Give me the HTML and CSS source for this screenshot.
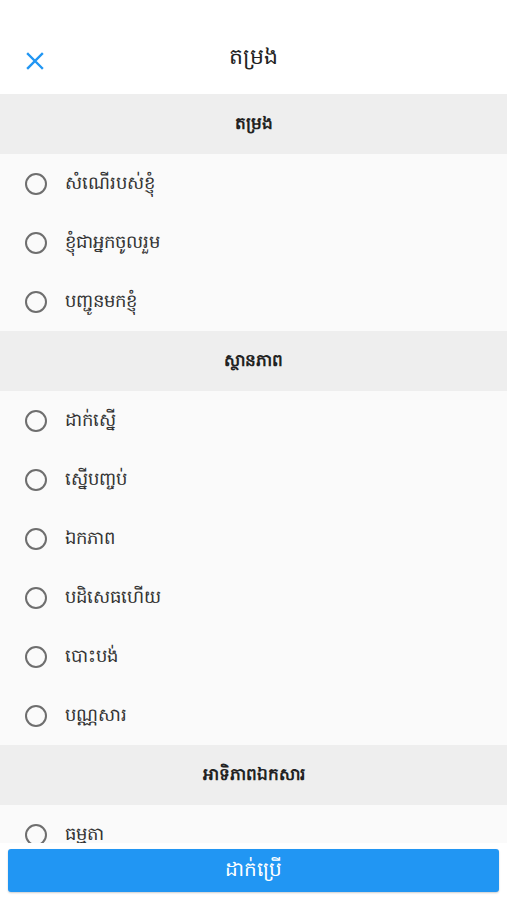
FILE: index.html
```html
<!DOCTYPE html>
<html lang="km">
<head>
    <meta charset="UTF-8">
    <meta name="viewport" content="width=device-width, initial-scale=1.0">
    <title>តម្រង</title>
    <link rel="stylesheet" href="styles.css">
</head>
<body>
    <div class="filter-screen">
        <!-- Header -->
        <header class="filter-header">
            <button class="close-btn" aria-label="close">
                <svg width="20" height="20" viewBox="0 0 20 20">
                    <path d="M3 3 L17 17 M17 3 L3 17" stroke="#2196F3" stroke-width="2.4" stroke-linecap="square" fill="none"/>
                </svg>
            </button>
            <h1 class="filter-title">តម្រង</h1>
        </header>

        <!-- Filter List -->
        <div class="filter-list">
            <div class="section-title">តម្រង</div>
            <label class="option"><span class="radio"></span>សំណើរបស់ខ្ញុំ</label>
            <label class="option"><span class="radio"></span>ខ្ញុំជាអ្នកចូលរួម</label>
            <label class="option"><span class="radio"></span>បញ្ជូនមកខ្ញុំ</label>

            <div class="section-title">ស្ថានភាព</div>
            <label class="option"><span class="radio"></span>ដាក់ស្នើ</label>
            <label class="option"><span class="radio"></span>ស្នើបញ្ចប់</label>
            <label class="option"><span class="radio"></span>ឯកភាព</label>
            <label class="option"><span class="radio"></span>បដិសេធហើយ</label>
            <label class="option"><span class="radio"></span>បោះបង់</label>
            <label class="option"><span class="radio"></span>បណ្ណសារ</label>

            <div class="section-title">អាទិភាពឯកសារ</div>
            <label class="option"><span class="radio"></span>ធម្មតា</label>
        </div>

        <!-- Footer -->
        <footer class="filter-footer">
            <button class="apply-btn">ដាក់ប្រើ</button>
        </footer>
    </div>
</body>
</html>
```

FILE: styles.css
```css
/* ----- Color Variables ----- */
:root {
    --primary-color: #2196F3;
    --header-background: #FFFFFF;
    --section-background: #EEEEEE;
    --list-background: #FAFAFA;
    --text-color: #333333;
    --radio-color: #6E6E6E;
}

/* ----- Global Reset ----- */
* {
    margin: 0;
    padding: 0;
    box-sizing: border-box;
    font-family: "Noto Sans", "DejaVu Sans", sans-serif;
}

body {
    background: #FFFFFF;
    height: 100vh;
    overflow: hidden;
}

.filter-screen {
    height: 100vh;
    display: flex;
    flex-direction: column;
}

/* ----- Header ----- */
.filter-header {
    height: 94px;
    padding-top: 24px;
    background: var(--header-background);
    display: flex;
    align-items: center;
    position: relative;
}

.close-btn {
    width: 70px;
    height: 70px;
    border: none;
    background: none;
    display: flex;
    align-items: center;
    justify-content: center;
    margin-top: 4px;
}

.filter-title {
    position: absolute;
    left: 0;
    right: 0;
    top: 24px;
    height: 62px;
    line-height: 62px;
    text-align: center;
    font-size: 22px;
    font-weight: 400;
    color: #222;
    pointer-events: none;
}

/* ----- List ----- */
.filter-list {
    flex: 1;
    overflow: hidden;
    background: var(--list-background);
}

.section-title {
    height: 60px;
    background: var(--section-background);
    display: flex;
    align-items: center;
    justify-content: center;
    font-size: 17px;
    font-weight: 700;
    color: #222;
}

.option {
    height: 59px;
    display: flex;
    align-items: center;
    gap: 18px;
    padding-left: 25px;
    font-size: 18px;
    color: var(--text-color);
}

.radio {
    width: 22px;
    height: 22px;
    border: 2px solid var(--radio-color);
    border-radius: 50%;
    flex-shrink: 0;
}

/* ----- Footer ----- */
.filter-footer {
    padding: 6px 8px 8px;
    background: #FFFFFF;
}

.apply-btn {
    width: 100%;
    height: 43px;
    border: none;
    border-radius: 3px;
    background: var(--primary-color);
    color: white;
    font-size: 20px;
    box-shadow: 0 1px 2px rgba(0, 0, 0, 0.2);
}
```
